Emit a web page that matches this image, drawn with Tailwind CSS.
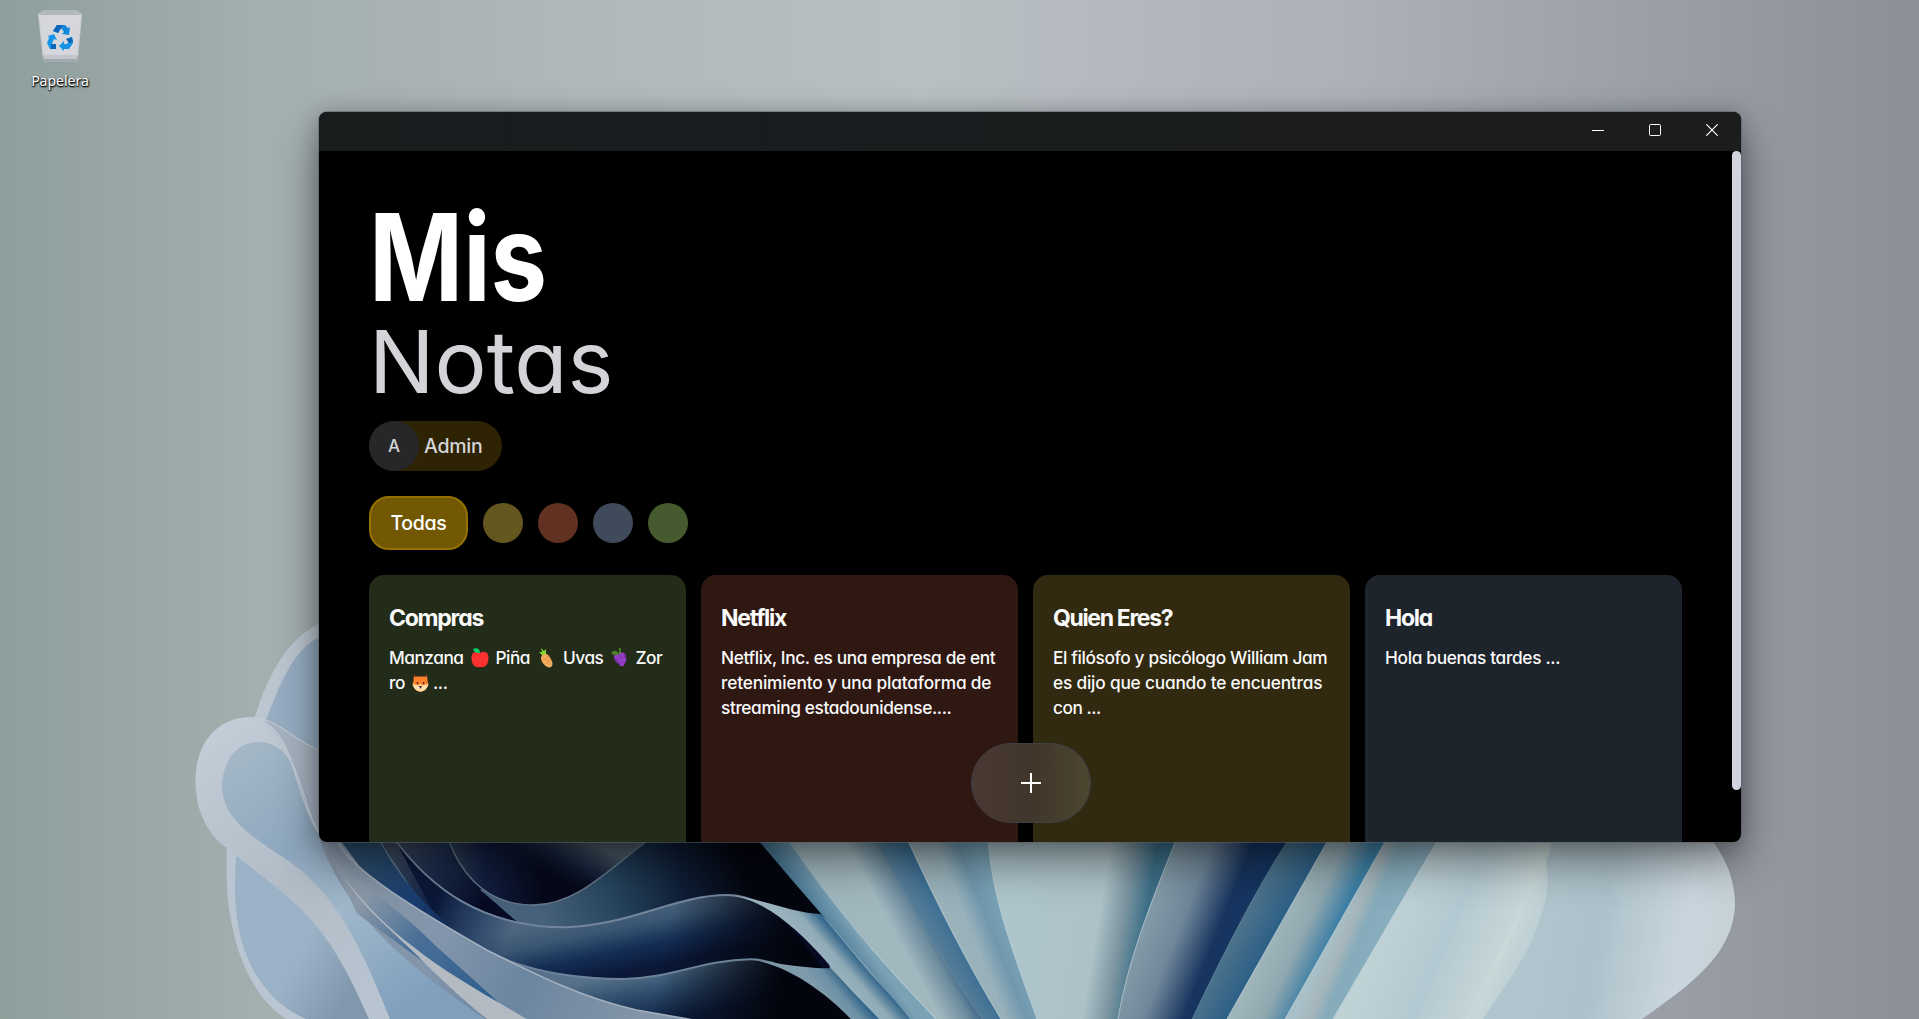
<!DOCTYPE html>
<html lang="es">
<head>
<meta charset="utf-8">
<title>Mis Notas</title>
<script src="https://cdn.jsdelivr.net/npm/@tailwindcss/browser@4"></script>
</head>
<body class="h-screen w-screen overflow-hidden bg-[#9aa3a6] font-['Inter',sans-serif]">
<main class="relative h-full w-full overflow-hidden">
<!-- Wallpaper -->
<svg class="absolute inset-0" width="1919" height="1019" viewBox="0 0 1919 1019" fill="none">
  <defs>
    <linearGradient id="bg" x1="0" y1="0" x2="1919" y2="0" gradientUnits="userSpaceOnUse"><stop offset="0" stop-color="#8e9f9c"/><stop offset=".13" stop-color="#a3aeae"/><stop offset=".3" stop-color="#afb8ba"/><stop offset=".48" stop-color="#b9c0c3"/><stop offset=".7" stop-color="#adb1b9"/><stop offset=".86" stop-color="#9a9fa8"/><stop offset="1" stop-color="#8b9098"/></linearGradient>
    <linearGradient id="loop" x1="195" y1="740" x2="390" y2="1019" gradientUnits="userSpaceOnUse"><stop stop-color="#c3cdd7"/><stop offset=".5" stop-color="#b2bcc7"/><stop offset="1" stop-color="#b9c6d1"/></linearGradient>
    <linearGradient id="inner" x1="225" y1="760" x2="400" y2="1019" gradientUnits="userSpaceOnUse"><stop stop-color="#a3b7c6"/><stop offset=".35" stop-color="#8fa8bf"/><stop offset=".6" stop-color="#a0b7ca"/><stop offset="1" stop-color="#7f9fbd"/></linearGradient>
    <linearGradient id="low" x1="235" y1="880" x2="370" y2="960" gradientUnits="userSpaceOnUse"><stop stop-color="#9cb3c7"/><stop offset=".6" stop-color="#9bb2c6"/><stop offset="1" stop-color="#8097ae"/></linearGradient>
    <linearGradient id="navy" x1="90" y1="20" x2="330" y2="210" gradientUnits="userSpaceOnUse"><stop stop-color="#3a4a5e"/><stop offset=".4" stop-color="#1b2c4c"/><stop offset="1" stop-color="#060b23"/></linearGradient>
    <linearGradient id="slope" x1="520" y1="250" x2="1230" y2="90" gradientUnits="userSpaceOnUse"><stop stop-color="#47617a"/><stop offset=".3" stop-color="#27465f"/><stop offset=".6" stop-color="#0e1d35"/><stop offset=".85" stop-color="#04060f"/></linearGradient>
    <linearGradient id="bowl" x1="240" y1="60" x2="520" y2="60" gradientUnits="userSpaceOnUse"><stop stop-color="#2e4055"/><stop offset=".35" stop-color="#121f42"/><stop offset="1" stop-color="#050818"/></linearGradient>
    <linearGradient id="bowltop" x1="640" y1="0" x2="580" y2="130" gradientUnits="userSpaceOnUse"><stop stop-color="#4c5b66"/><stop offset=".5" stop-color="#1d2c48" stop-opacity=".8"/><stop offset="1" stop-color="#0a1330" stop-opacity="0"/></linearGradient>
    <linearGradient id="fold" x1="650" y1="225" x2="690" y2="415" gradientUnits="userSpaceOnUse"><stop stop-color="#4e667f"/><stop offset=".3" stop-color="#3a5672"/><stop offset=".65" stop-color="#142d56"/><stop offset="1" stop-color="#0a1736"/></linearGradient>
    <linearGradient id="foldleft" x1="200" y1="180" x2="430" y2="260" gradientUnits="userSpaceOnUse"><stop stop-color="#0b1838"/><stop offset=".5" stop-color="#122a55" stop-opacity=".6"/><stop offset="1" stop-color="#122a55" stop-opacity="0"/></linearGradient>
    <linearGradient id="dark" x1="900" y1="260" x2="1250" y2="330" gradientUnits="userSpaceOnUse"><stop stop-color="#03050e" stop-opacity="0"/><stop offset="1" stop-color="#03050e"/></linearGradient>
    <linearGradient id="fold2" x1="800" y1="395" x2="830" y2="550" gradientUnits="userSpaceOnUse"><stop stop-color="#567189"/><stop offset=".4" stop-color="#31506f"/><stop offset="1" stop-color="#0d2043"/></linearGradient>
    <linearGradient id="tail" x1="1350" y1="375" x2="1430" y2="305" gradientUnits="userSpaceOnUse"><stop stop-color="#9db5bf"/><stop offset=".5" stop-color="#8fabb7"/><stop offset="1" stop-color="#245a83"/></linearGradient>
    <linearGradient id="tail2" x1="1380" y1="485" x2="1440" y2="435" gradientUnits="userSpaceOnUse"><stop stop-color="#7f9aab"/><stop offset=".5" stop-color="#6b90a5"/><stop offset="1" stop-color="#2c5f86"/></linearGradient>
    <linearGradient id="blue" x1="0" y1="20" x2="270" y2="260" gradientUnits="userSpaceOnUse"><stop stop-color="#2c4d6b"/><stop offset=".6" stop-color="#1a3d70"/><stop offset="1" stop-color="#0e2350"/></linearGradient>
    <linearGradient id="ribbon" x1="0" y1="120" x2="800" y2="560" gradientUnits="userSpaceOnUse"><stop stop-color="#8695a6"/><stop offset=".3" stop-color="#8295ab"/><stop offset=".6" stop-color="#6c86a0"/><stop offset="1" stop-color="#8395a8"/></linearGradient>
    <linearGradient id="band" x1="0" y1="150" x2="440" y2="530" gradientUnits="userSpaceOnUse"><stop stop-color="#8b99a8"/><stop offset=".35" stop-color="#496f97"/><stop offset="1" stop-color="#28598a"/></linearGradient>
    <linearGradient id="s1" x1="824" y1="940" x2="850" y2="922" gradientUnits="userSpaceOnUse"><stop stop-color="#3a6d8d"/><stop offset="1" stop-color="#7ba1b4"/></linearGradient>
    <linearGradient id="s2" x1="850" y1="965" x2="937" y2="918" gradientUnits="userSpaceOnUse"><stop stop-color="#9fb6bd"/><stop offset=".55" stop-color="#a2b8bf"/><stop offset=".8" stop-color="#6c8b9d"/><stop offset="1" stop-color="#1e4f7c"/></linearGradient>
    <linearGradient id="s3" x1="928" y1="942" x2="955" y2="927" gradientUnits="userSpaceOnUse"><stop stop-color="#5c819a"/><stop offset="1" stop-color="#396d93"/></linearGradient>
    <linearGradient id="s4" x1="950" y1="945" x2="1008" y2="922" gradientUnits="userSpaceOnUse"><stop stop-color="#9cb3ba"/><stop offset=".4" stop-color="#98b1ba"/><stop offset=".7" stop-color="#7198ae"/><stop offset="1" stop-color="#7ba3b7"/></linearGradient>
    <linearGradient id="s5" x1="1010" y1="918" x2="1142" y2="940" gradientUnits="userSpaceOnUse"><stop stop-color="#aec5cc"/><stop offset=".65" stop-color="#adc2c8"/><stop offset=".82" stop-color="#8199a3"/><stop offset="1" stop-color="#3c6f88"/></linearGradient>
    <linearGradient id="s6" x1="1137" y1="905" x2="1236" y2="944" gradientUnits="userSpaceOnUse"><stop stop-color="#8ba3ad"/><stop offset=".45" stop-color="#70879a"/><stop offset=".8" stop-color="#18345f"/><stop offset="1" stop-color="#153561"/></linearGradient>
    <linearGradient id="s7" x1="1238" y1="924" x2="1272" y2="943" gradientUnits="userSpaceOnUse"><stop stop-color="#4e748c"/><stop offset="1" stop-color="#2b5e86"/></linearGradient>
    <linearGradient id="s8" x1="1277" y1="925" x2="1326" y2="948" gradientUnits="userSpaceOnUse"><stop stop-color="#9eb5ba"/><stop offset=".5" stop-color="#91a8b0"/><stop offset="1" stop-color="#3e7fa5"/></linearGradient>
    <linearGradient id="s9" x1="1334" y1="925" x2="1382" y2="946" gradientUnits="userSpaceOnUse"><stop stop-color="#a9c0c8"/><stop offset=".3" stop-color="#a5b5bb"/><stop offset=".55" stop-color="#86acbb"/><stop offset="1" stop-color="#89aebe"/></linearGradient>
    <linearGradient id="s10" x1="1390" y1="910" x2="1520" y2="965" gradientUnits="userSpaceOnUse"><stop stop-color="#bfd2d6"/><stop offset=".45" stop-color="#b3c9d1"/><stop offset=".85" stop-color="#c8d7d8"/><stop offset="1" stop-color="#bdd0d5"/></linearGradient>
    <linearGradient id="s11" x1="1540" y1="925" x2="1730" y2="960" gradientUnits="userSpaceOnUse"><stop stop-color="#b0c5cd"/><stop offset=".3" stop-color="#adc1ca"/><stop offset=".75" stop-color="#cad6de"/><stop offset="1" stop-color="#c6d1d6"/></linearGradient>
  </defs>
  <rect width="1919" height="1019" fill="url(#bg)"/>
  <!-- Left petals -->
  <path d="M330 620C292 630 268 672 254 720L262 780H330Z" fill="#bbc6d0"/>
  <path d="M330 634C296 640 280 684 266 720L330 800Z" fill="#97adc2"/>
  <path d="M227 845C226 880 227 900 231 920C238 962 257 1000 286 1019H400L330 880Z" fill="#b9c6d1"/>
  <path d="M236 856C234 890 235 905 238 925C245 968 270 1004 306 1019H400L320 900Z" fill="url(#low)"/>
  <path d="M251 717C216 717 195 745 195.500 782C196 812 208 835 227 848C270 884 300 900 330 944C348 972 358 995 369 1019H500L330 842L325 752C290 738 280 718 251 717Z" fill="url(#loop)"/>
  <path d="M260 742C238 741 222 760 222 788C224 822 258 840 290 862C340 896 366 960 390 1019H490L400 950L330 842C306 812 306 743 260 742Z" fill="url(#inner)"/>
  <path d="M262 720C284 724 296 745 325 752V845C305 810 308 762 262 720Z" fill="#a7b3c0"/>
  <path d="M258 719C300 736 290 800 330 850M268 742C304 752 300 810 325 842" stroke="#c3ccd5" stroke-width="1.500"/>
  <path d="M319 835H400L490 1019C430 975 360 915 319 835Z" fill="#8d9cab"/>
  <!-- Folds -->
  <g transform="translate(370 840) scale(.33333)">
    <path d="M-60 0H1500V540H480L0 180Z" fill="url(#navy)"/>
    <path d="M330 150C380 190 410 220 450 252C700 300 900 200 1070 175L1400 250L1180 0H600Z" fill="url(#slope)"/>
    <path d="M235 0C270 90 340 195 490 195C620 195 720 85 835 0Z" fill="url(#bowl)"/>
    <path d="M235 0C270 90 340 195 490 195C620 195 720 85 835 0Z" fill="url(#bowltop)"/>
    <path d="M235 0C270 90 340 195 490 195C620 195 720 85 835 0" stroke="#66788a" stroke-width="4"/>
    <path d="M75 0C180 140 330 262 590 262C780 255 920 165 1070 165C1220 165 1340 340 1450 540H600L200 240Z" fill="url(#fold)"/>
    <path d="M75 0C180 140 330 262 590 262L440 400L200 240Z" fill="url(#foldleft)"/>
    <path d="M800 235C920 200 990 165 1070 165C1220 165 1340 340 1450 540H700Z" fill="url(#dark)"/>
    <path d="M75 0C180 140 330 262 590 262C780 255 920 165 1070 165C1130 165 1180 190 1220 220" stroke="#72859a" stroke-width="6"/>
    <path d="M1352 222L1380 385L1530 540H1680Z" fill="#7fa0b0"/>
    <path d="M1070 165C1180 175 1260 218 1352 222L1500 400L1630 540H1520C1420 440 1260 180 1070 165Z" fill="url(#tail)"/>
    <path d="M28 0C80 110 200 270 380 348C500 400 640 417 760 417C900 415 1000 360 1140 358C1280 360 1370 460 1450 540H600L200 260Z" fill="url(#fold2)"/>
    <path d="M850 405C950 390 1050 360 1140 358C1280 360 1370 460 1450 540H850Z" fill="url(#dark)"/>
    <path d="M28 0C80 110 200 270 380 348C500 400 640 417 760 417C900 415 1000 360 1140 358C1180 358 1230 372 1265 392" stroke="#6b8298" stroke-width="6"/>
    <path d="M1140 358C1250 375 1320 385 1380 385L1530 540H1445C1380 470 1260 375 1140 358Z" fill="url(#tail2)"/>
    <path d="M-90 0H28C80 110 190 225 300 305L0 120Z" fill="url(#blue)"/>
    <path d="M-100 0C-60 90 150 215 350 330C500 405 640 475 800 510L970 540H350C180 420 -60 260 -150 0Z" fill="url(#ribbon)"/>
    <path d="M-100 0C-60 90 150 215 350 330C500 405 640 475 800 510L970 540" stroke="#a3afbd" stroke-width="5"/>
    <path d="M-120 40C-20 150 60 180 200 320C290 400 370 470 440 540H400L-40 220Z" fill="url(#band)"/>
    <path d="M-80 110C-20 190 60 270 130 320C230 400 340 460 475 540H355C280 480 220 425 130 335C40 250 -30 190 -80 110Z" fill="#b4bac2"/>
  </g>
  <!-- Right fan -->
  <path d="M758 840L790 840C840 915 880 960 936 1019H910C875 975 800 890 758 840Z" fill="url(#s1)"/>
  <path d="M789 840H878C910 905 945 965 982 1019H936C880 960 840 915 789 840Z" fill="url(#s2)"/>
  <path d="M877 840H908C935 900 968 965 1001 1019H982C945 965 910 905 877 840Z" fill="url(#s3)"/>
  <path d="M907 840H988C992 900 1016 960 1037 1019H1001C968 965 935 900 907 840Z" fill="url(#s4)"/>
  <path d="M988 840H1176C1150 905 1128 960 1118 1019H1037C1016 960 992 900 988 840Z" fill="url(#s5)"/>
  <path d="M1176 840H1288C1255 890 1220 960 1192 1019H1118C1128 960 1150 905 1176 840Z" fill="url(#s6)"/>
  <path d="M1288 840H1328L1227 1019H1192C1220 960 1255 890 1288 840Z" fill="url(#s7)"/>
  <path d="M1328 840H1386L1285 1019H1227Z" fill="url(#s8)"/>
  <path d="M1550 840H1712C1728 862 1735 882 1735 905C1733 955 1690 985 1642 1019H1460Z" fill="url(#s11)"/>
  <path d="M1386 840H1438L1333 1019H1285Z" fill="url(#s9)"/>
  <path d="M1437 840H1553L1546 863C1549 880 1548 895 1541 915C1530 955 1505 985 1483 1019H1333Z" fill="url(#s10)"/>
  <path d="M1520 915C1503 945 1485 985 1467 1019" stroke="#d3e0df" stroke-width="2" opacity=".3"/>
  <path d="M788 840C840 915 880 960 936 1019M908 840C935 900 968 965 1001 1019M988 840C992 900 1016 960 1037 1019M1176 840C1150 905 1128 960 1118 1019M1328 840L1227 1019M1386 840L1285 1019M1438 840L1333 1019" stroke="#bed5dd" stroke-opacity=".5" stroke-width="1.200"/>
</svg>

<!-- Desktop icon -->
<div class="absolute left-0 top-2 flex w-[120px] flex-col items-center">
  <svg width="48" height="56" viewBox="0 0 48 56">
    <path d="M2 6L8 2H40L46 6L42 52H7Z" fill="#c9ccd1"/>
    <path d="M2 6L8 2H40L46 6L41 8H7Z" fill="#b3b9bb"/>
    <path d="M3 7H45L41 48H8Z" fill="#d5d7dc"/>
    <path d="M7 48H42L41.500 54H7.500Z" fill="#a4a9b0"/><path d="M8 47H41V51H8Z" fill="#c3c6cc"/>
    <path d="M17 23L21 17H29L32 20L34 19L33 27L26 26L28 24L25 20L22 25Z" fill="#1289dc"/><path d="M17 23L21 17H27L22 25Z" fill="#0a67b8"/>
    <path d="M12 28L18 26L21 32L18 31L16 36L19 41H14L11 35L13 30Z" fill="#1594e8"/><path d="M15 36H20V41H15Z" fill="#0a67b8"/>
    <path d="M36 29L37 35L33 41H28V43L23 38L28 33V36H31L33 33L30 31Z" fill="#1594e8"/><path d="M36 29L37 34L33 35L30 31Z" fill="#0a67b8"/>
  </svg>
  <span class="mt-[7px] font-['Noto_Sans',sans-serif] text-[14px] leading-[20px] text-white [text-shadow:1px_1px_2px_#000,0_1px_1px_#000]">Papelera</span>
</div>

<!-- Notes window -->
<section class="absolute left-[319px] top-[112px] flex h-[730px] w-[1422px] flex-col overflow-hidden rounded-lg bg-black shadow-[0_0_0_1px_rgba(90,98,105,0.55),0_20px_44px_rgba(0,0,0,0.45),0_2px_20px_rgba(0,0,0,0.2)]">
  <header class="flex h-[39px] shrink-0 items-start justify-end bg-linear-to-r from-[#181c1d] to-[#1b1c1e] pr-px">
    <div class="flex h-9 items-center">
      <span class="flex w-[57px] justify-center"><svg width="12" height="12" viewBox="0 0 12 12" stroke="#fff"><path d="M0 6.500H12"/></svg></span>
      <span class="flex w-[57px] justify-center"><svg width="12" height="12" viewBox="0 0 12 12" stroke="#fff" fill="none"><rect x=".5" y=".5" width="11" height="11" rx="1"/></svg></span>
      <span class="flex w-[57px] justify-center"><svg width="12" height="12" viewBox="0 0 12 12" stroke="#fff" stroke-width="1.200"><path d="M.3.3L11.700 11.700M11.700.3L.3 11.700"/></svg></span>
    </div>
  </header>
  <div class="flex min-h-0 flex-1">
    <div class="min-w-0 flex-1 px-[50px] pt-[44px] [font-feature-settings:'cv11']">
      <h1 class="flex flex-col items-start whitespace-nowrap">
        <span class="h-[122px] origin-left scale-x-[0.835] text-[121px] font-bold leading-[125px] text-white">Mis</span>
        <span class="h-[94px] text-[87px] leading-[90px] text-[#d4d4d8]">Notas</span>
      </h1>
      <div class="mt-[10px] flex h-[50px] w-[133px] items-center gap-[5px] rounded-full bg-[#2e2303] text-[#d4d4d8]">
        <span class="flex size-[50px] items-center justify-center rounded-full bg-[#27272a] pt-px text-[17px] font-medium">A</span>
        <span class="pt-0.5 text-[19.500px] font-medium tracking-[-0.25px]">Admin</span>
      </div>
      <div class="mt-[25px] flex items-center gap-[15px]">
        <span class="flex h-[54px] w-[99px] items-center justify-center rounded-[20px] border-2 border-[#957003] bg-[#735804] pt-0.5 text-[19.500px] font-medium tracking-[-0.3px] text-white">Todas</span>
        <span class="size-10 rounded-full bg-[#64561f]"></span>
        <span class="size-10 rounded-full bg-[#613122]"></span>
        <span class="size-10 rounded-full bg-[#3f4a5b]"></span>
        <span class="size-10 rounded-full bg-[#455a2e]"></span>
      </div>
      <div class="mt-[25px] grid grid-cols-4 gap-[15px] whitespace-nowrap text-[17.300px] font-medium leading-[25px] text-[#fafafa]">
        <article class="h-[317px] rounded-[15px] bg-[#232b19] px-5 pt-[28px]">
          <h2 class="text-[23px] font-bold leading-[30px] tracking-[-1.25px]">Compras</h2>
          <p class="mt-[12px] flex items-center tracking-[-0.5px]"><span>Manzana</span>
            <svg class="ml-[7px] mr-[7px]" width="18" height="20" viewBox="0 0 18 20"><path d="M9 5C4 2 0 5 .5 11C1 17 4 20 9 19C14 20 17 17 17.500 11C18 5 14 2 9 5Z" fill="#f8312f"/><path d="M2 1C6-1 9 1 9 5C5 5 3 4 2 1Z" fill="#00d26a"/></svg>
            <span>Piña</span>
            <svg class="ml-2 mr-[7px]" width="18" height="20" viewBox="0 0 18 20"><path d="M3 10C3 6 8 4 11 8C14 12 16 17 13 19C9 21 3 15 3 10Z" fill="#f3ad61"/><path d="M4 7L1 4L4 4L3 0L6 3L8 1V6Z" fill="#86d72f"/><path d="M5 9L13 17M8 7L14 14M5 13L11 8M8 16L13 11" stroke="#d98a35" stroke-width=".6"/></svg>
            <span>Uvas</span>
            <svg class="ml-2 mr-2" width="16" height="20" viewBox="0 0 16 20"><path d="M3 8C3 5 6 4 8 5C11 3 15 5 15 8C16 11 15 15 13 17C10 19 8 18 8 16C5 15 3 12 3 8Z" fill="#7d30ad"/><g fill="#9440c4"><circle cx="6" cy="9" r="2.300"/><circle cx="11" cy="7.500" r="2.300"/><circle cx="9" cy="12.500" r="2.300"/><circle cx="13" cy="12" r="2.200"/><circle cx="11" cy="16" r="2.200"/></g><path d="M0 5C3 1 7 3 8 6C5 8 3 8 0 5Z" fill="#4f7d2c"/><path d="M9 0V6" stroke="#56a832" stroke-width="1.300"/></svg>
            <span>Zor</span></p>
          <p class="flex items-center tracking-[-0.4px]"><span>ro</span>
            <svg class="ml-[7px] mr-1" width="17" height="18" viewBox="0 0 17 18"><path d="M2 1L5.500 2.500H11.500L15 1L15.500 7L16.500 10L13 16L8.500 18L4 16L.5 10L1.500 7Z" fill="#ff822d"/><path d="M2.200 0L5.500 2.500L2.500 3ZM14.800 0L11.500 2.500L14.500 3Z" fill="#5b2c20"/><path d="M.5 10L6.500 11.500L8.500 10L10.500 11.500L16.500 10C15.500 15 12 17.500 8.500 17.500S1.500 15 .5 10Z" fill="#ffdea7"/><circle cx="5.500" cy="9" r=".9" fill="#402a32"/><circle cx="11.500" cy="9" r=".9" fill="#402a32"/><path d="M7 12H10L8.500 15Z" fill="#402a32"/></svg>
            <span>...</span></p>
        </article>
        <article class="h-[317px] rounded-[15px] bg-[#2f1812] px-5 pt-[28px]">
          <h2 class="text-[23px] font-bold leading-[30px] tracking-[-1.25px]">Netflix</h2>
          <p class="mt-[12px]"><span class="tracking-[-0.37px]">Netflix, Inc. es una empresa de ent</span><br><span class="tracking-[-0.17px]">retenimiento y una plataforma de</span><br><span class="tracking-[-0.4px]">streaming estadounidense....</span></p>
        </article>
        <article class="h-[317px] rounded-[15px] bg-[#312910] px-5 pt-[28px]">
          <h2 class="text-[23px] font-bold leading-[30px] tracking-[-1.350px]">Quien Eres?</h2>
          <p class="mt-[12px]"><span class="tracking-[-0.37px]">El filósofo y psicólogo William Jam</span><br><span class="tracking-[-0.2px]">es dijo que cuando te encuentras</span><br><span class="tracking-[-0.5px]">con ...</span></p>
        </article>
        <article class="h-[317px] rounded-[15px] bg-[#1e242c] px-5 pt-[28px]">
          <h2 class="text-[23px] font-bold leading-[30px] tracking-[-1.25px]">Hola</h2>
          <p class="mt-[12px]"><span class="tracking-[-0.33px]">Hola buenas tardes ...</span></p>
        </article>
      </div>
    </div>
    <div class="w-[9px]"><div class="h-[639px] rounded-full bg-[#d1d4de]"></div></div>
  </div>
  <!-- Add note -->
  <button class="absolute left-[652px] top-[631px] flex h-20 w-[120px] items-center justify-center rounded-[40px] border border-[#3f3f46] bg-linear-to-r from-[#4a3833] via-[#40362b] to-[#4d4630]">
    <svg width="20" height="20" viewBox="0 0 20 20" stroke="#fff" stroke-width="2"><path d="M10 0V20M0 10H20"/></svg>
  </button>
</section>
</main>
</body>
</html>
